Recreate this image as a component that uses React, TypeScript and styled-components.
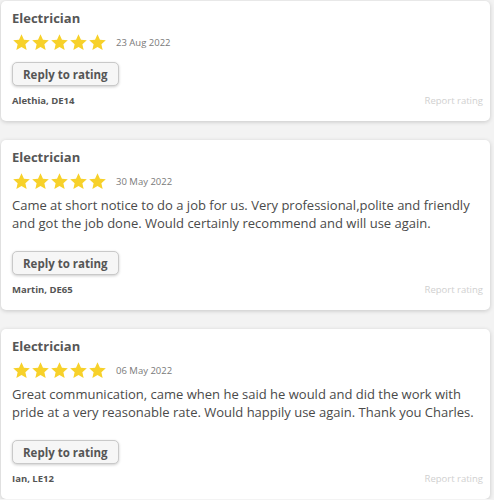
import React from "react";
import styled, { createGlobalStyle } from "styled-components";

const Global = createGlobalStyle`
  html, body { margin: 0; padding: 0; background: #f3f3f3; }
  body { font-family: "Open Sans", "Noto Sans", sans-serif; }
`;

const List = styled.div`
  display: flex;
  flex-direction: column;
  gap: 19px;
  padding: 1px 4px 0 1px;
`;

const Card = styled.div`
  background: #fff;
  border-radius: 5px;
  box-shadow: 0 1px 4px rgba(0, 0, 0, 0.18);
  padding: 8px 7px 13px 11px;
  display: flex;
  flex-direction: column;
`;

const Title = styled.div`
  font-size: 13px;
  font-weight: 700;
  color: #565656;
  line-height: 18px;
  margin-bottom: 4px;
`;

const StarRow = styled.div`
  display: flex;
  align-items: center;
  height: 22px;
`;

const Stars = styled.div`
  display: flex;
  margin-right: 9px;
`;

const Date = styled.span`
  font-size: 9.5px;
  color: #7a7a7a;
`;

const Body = styled.p`
  margin: 4px 0 19px;
  font-size: 13px;
  line-height: 18px;
  color: #4a4a4a;
`;

const ReplyButton = styled.button<{ $gap: number }>`
  align-self: flex-start;
  margin-top: ${(p) => p.$gap}px;
  font-family: inherit;
  font-size: 11.5px;
  font-weight: 700;
  color: #555;
  background: #f6f6f6;
  border: 1px solid #c9c9c9;
  border-radius: 5px;
  box-shadow: 0 1px 3px rgba(0, 0, 0, 0.2);
  padding: 0 10px;
  height: 24px;
`;

const Footer = styled.div`
  display: flex;
  justify-content: space-between;
  align-items: center;
  margin-top: 8px;
  font-size: 9.5px;
  line-height: 14px;
`;

const Author = styled.span`
  font-weight: 700;
  color: #555;
`;

const Report = styled.span`
  color: #d0d0d0;
`;

const Star = () => (
  <svg width="19" height="19" viewBox="0 0 24 24">
    <path
      d="M12 1.6l3.1 6.9 7.4.7-5.6 5 1.6 7.4L12 17.8l-6.5 3.8 1.6-7.4-5.6-5 7.4-.7z"
      fill="#f7d12a"
    />
  </svg>
);

type Review = { date: string; text?: string; author: string };

const reviews: Review[] = [
  { date: "23 Aug 2022", author: "Alethia, DE14" },
  {
    date: "30 May 2022",
    text: "Came at short notice to do a job for us. Very professional,polite and friendly and got the job done. Would certainly recommend and will use again.",
    author: "Martin, DE65",
  },
  {
    date: "06 May 2022",
    text: "Great communication, came when he said he would and did the work with pride at a very reasonable rate. Would happily use again. Thank you Charles.",
    author: "Ian, LE12",
  },
];

export default function App() {
  return (
    <>
      <Global />
      <List>
        {reviews.map((r) => (
          <Card key={r.author}>
            <Title>Electrician</Title>
            <StarRow>
              <Stars>
                {[0, 1, 2, 3, 4].map((i) => (
                  <Star key={i} />
                ))}
              </Stars>
              <Date>{r.date}</Date>
            </StarRow>
            {r.text && <Body>{r.text}</Body>}
            <ReplyButton $gap={r.text ? 0 : 9}>Reply to rating</ReplyButton>
            <Footer>
              <Author>{r.author}</Author>
              <Report>Report rating</Report>
            </Footer>
          </Card>
        ))}
      </List>
    </>
  );
}
